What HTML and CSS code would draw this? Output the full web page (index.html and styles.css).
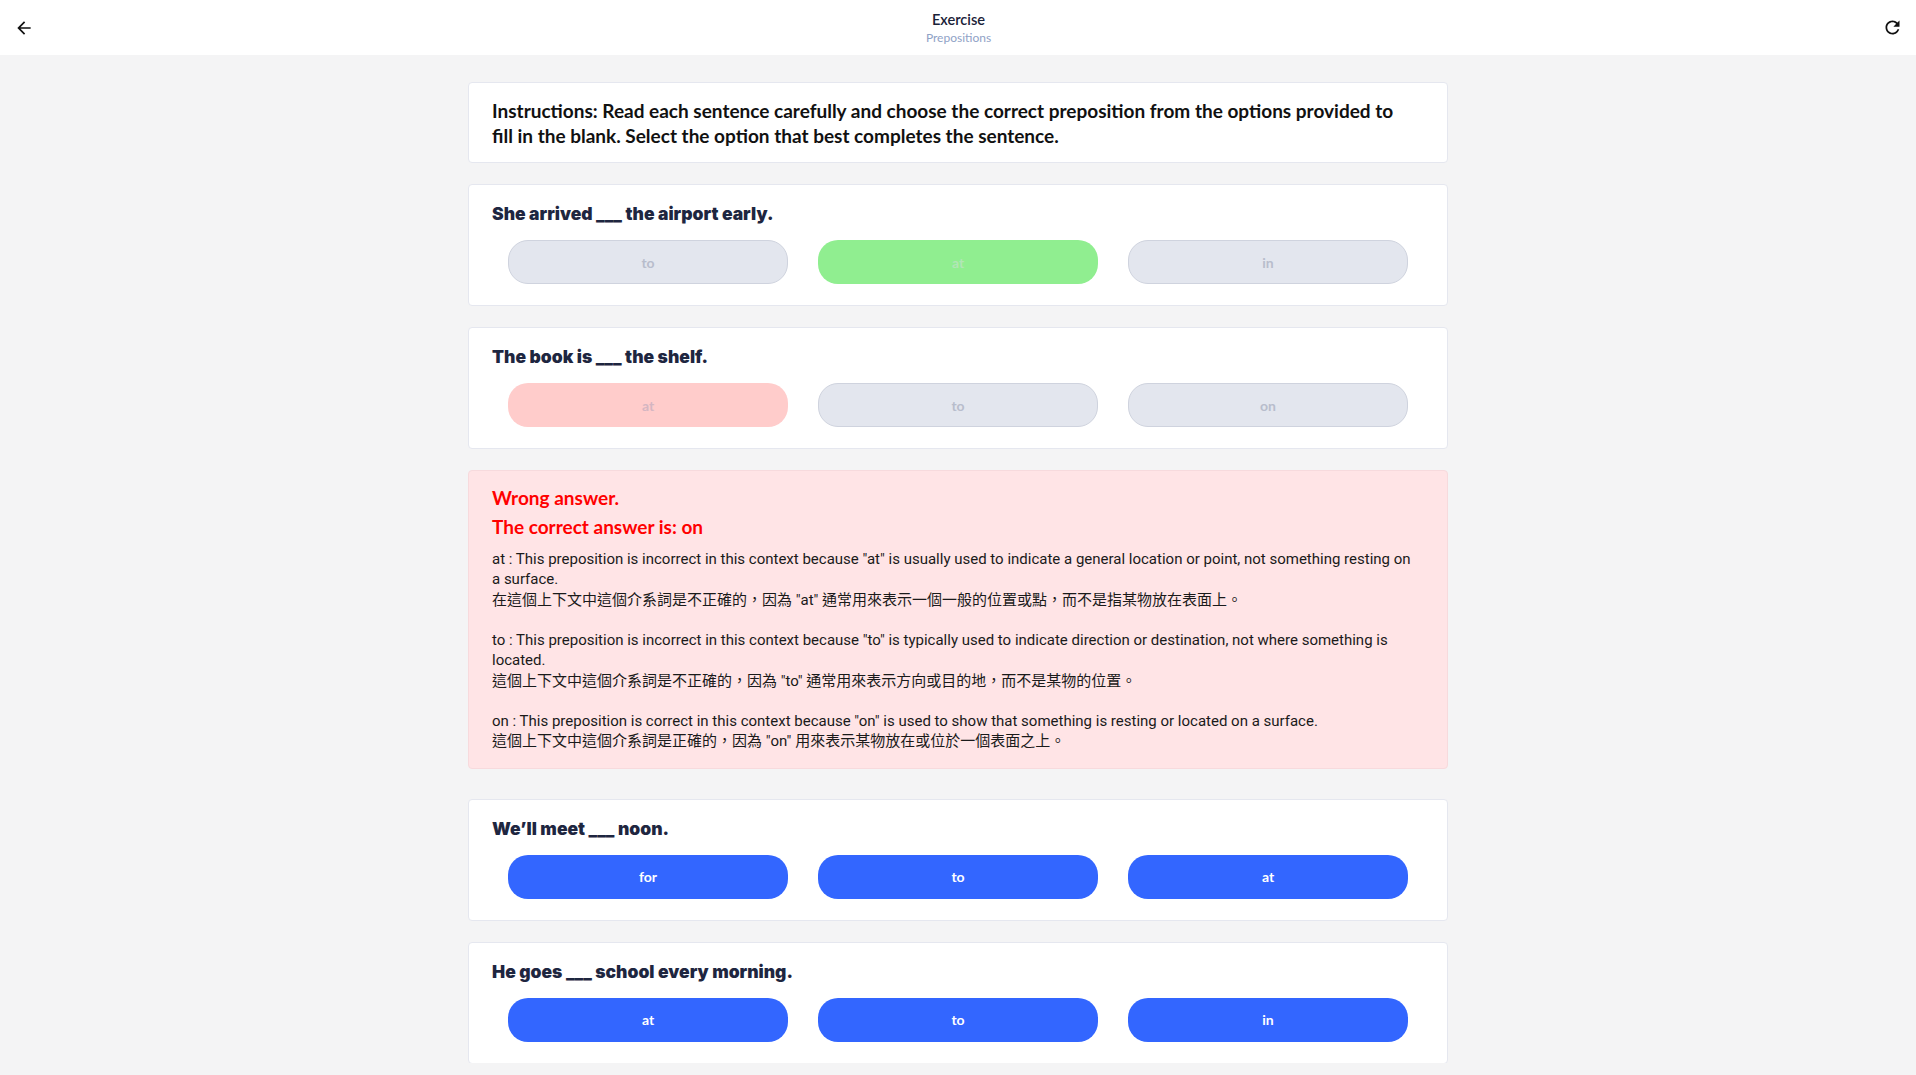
FILE: index.html
```html
<!DOCTYPE html>
<html lang="en">
<head>
<meta charset="utf-8">
<title>Exercise - Prepositions</title>
<link rel="stylesheet" href="styles.css">
</head>
<body>
<header class="topbar">
  <button class="icon-btn back" aria-label="Back">
    <svg viewBox="0 0 24 24" width="20" height="20"><path d="M20 11H7.83l5.59-5.59L12 4l-8 8 8 8 1.41-1.41L7.83 13H20v-2z"/></svg>
  </button>
  <div class="title-block">
    <div class="title">Exercise</div>
    <div class="subtitle">Prepositions</div>
  </div>
  <button class="icon-btn refresh" aria-label="Restart">
    <svg viewBox="0 0 24 24" width="21" height="21"><path d="M17.65 6.35C16.2 4.9 14.21 4 12 4c-4.42 0-7.99 3.58-7.99 8s3.57 8 7.99 8c3.73 0 6.84-2.55 7.73-6h-2.08c-.82 2.33-3.04 4-5.65 4-3.31 0-6-2.69-6-6s2.69-6 6-6c1.66 0 3.14.69 4.22 1.78L13 11h7V4l-2.35 2.35z"/></svg>
  </button>
</header>
<main class="scroll">
  <div class="content">
    <section class="card instructions">Instructions: Read each sentence carefully and choose the correct preposition from the options provided to fill in the blank. Select the option that best completes the sentence.</section>

    <section class="card question">
      <h2 class="q-text">She arrived ___ the airport early.</h2>
      <div class="options">
        <button class="opt opt-idle">to</button>
        <button class="opt opt-correct">at</button>
        <button class="opt opt-idle">in</button>
      </div>
    </section>

    <section class="card question">
      <h2 class="q-text">The book is ___ the shelf.</h2>
      <div class="options">
        <button class="opt opt-wrong">at</button>
        <button class="opt opt-idle">to</button>
        <button class="opt opt-idle">on</button>
      </div>
    </section>

    <section class="feedback">
      <h3 class="fb-head">Wrong answer.</h3>
      <h3 class="fb-head">The correct answer is: on</h3>
      <div class="fb-body">
        <p class="fb-item"><span class="en">at : This preposition is incorrect in this context because "at" is usually used to indicate a general location or point, not something resting on a surface.</span><span class="zh">在這個上下文中這個介系詞是不正確的，因為 "at" 通常用來表示一個一般的位置或點，而不是指某物放在表面上。</span></p>
        <p class="fb-item"><span class="en">to : This preposition is incorrect in this context because "to" is typically used to indicate direction or destination, not where something is located.</span><span class="zh">這個上下文中這個介系詞是不正確的，因為 "to" 通常用來表示方向或目的地，而不是某物的位置。</span></p>
        <p class="fb-item"><span class="en">on : This preposition is correct in this context because "on" is used to show that something is resting or located on a surface.</span><span class="zh">這個上下文中這個介系詞是正確的，因為 "on" 用來表示某物放在或位於一個表面之上。</span></p>
      </div>
    </section>

    <section class="card question">
      <h2 class="q-text">We’ll meet ___ noon.</h2>
      <div class="options">
        <button class="opt opt-active">for</button>
        <button class="opt opt-active">to</button>
        <button class="opt opt-active">at</button>
      </div>
    </section>

    <section class="card question">
      <h2 class="q-text">He goes ___ school every morning.</h2>
      <div class="options">
        <button class="opt opt-active">at</button>
        <button class="opt opt-active">to</button>
        <button class="opt opt-active">in</button>
      </div>
    </section>
  </div>
</main>
</body>
</html>
```
FILE: styles.css
```css
* { box-sizing: border-box; }
html, body { margin: 0; height: 100%; }
body {
  background: #f4f4f5;
  font-family: Lato, "Noto Sans CJK TC", sans-serif;
  overflow: hidden;
  color: #111;
}
.topbar {
  height: 55px;
  background: #fff;
  display: grid;
  grid-template-columns: 1fr auto 1fr;
  align-items: center;
  padding: 0 13px 0 14px;
}
.icon-btn {
  border: 0;
  background: none;
  padding: 0;
  display: flex;
  cursor: pointer;
}
.icon-btn svg { fill: #111; }
.icon-btn.refresh { justify-self: end; }
.title-block { text-align: center; }
.title {
  font-family: Lato, sans-serif;
  font-size: 14.6px;
  line-height: 20px;
  font-weight: 600;
  color: #1a2238;
}
.subtitle {
  font-family: Lato, sans-serif;
  font-size: 12px;
  line-height: 16px;
  color: #8fa2c6;
}

.scroll { height: calc(100vh - 67px); overflow: hidden; }
.content {
  width: 980px;
  margin: 0 auto;
  padding-top: 27px;
  display: flex;
  flex-direction: column;
  gap: 21px;
}
.card {
  background: #fff;
  border: 1px solid #e5e7ef;
  border-radius: 4px;
}
.instructions {
  padding: 15px 40px 14px 23px;
  font-family: Lato, sans-serif;
  font-size: 19px;
  line-height: 25px;
  font-weight: 700;
  color: #111;
}
.question { padding: 17px 23px 21px; }
.q-text {
  margin: 0 0 14px;
  font-family: Inter, Lato, sans-serif;
  font-size: 17.5px;
  line-height: 24px;
  font-weight: 900;
  color: #1e2640;
}
.options {
  display: grid;
  grid-template-columns: repeat(3, 1fr);
  gap: 30px;
  padding: 0 16px;
}
.opt {
  height: 44px;
  border-radius: 20px;
  border: 1px solid transparent;
  font-family: Lato, sans-serif;
  font-weight: 700;
  font-size: 14px;
  padding: 0;
}
.opt-idle { background: #e3e6ee; border-color: #cfd3de; color: #b8bdcc; }
.opt-correct { background: #90ee90; color: #b2e6b6; }
.opt-wrong { background: #ffcccb; color: #d4b6c2; }
.opt-active { background: #3366ff; color: #fff; }

.feedback {
  background: #ffe4e6;
  border: 1px solid #f7dadd;
  border-radius: 4px;
  padding: 13px 28px 16px 23px;
  margin-bottom: 9px;
}
.fb-head {
  margin: 0;
  font-family: Lato, sans-serif;
  font-size: 19px;
  line-height: 28px;
  font-weight: 700;
  color: #ff0000;
}
.fb-head + .fb-head { margin-top: 1px; }
.fb-body {
  margin-top: 8px;
  font-family: Roboto, "Noto Sans CJK TC", sans-serif;
  font-size: 15px;
  line-height: 20.25px;
  color: #1a1a1a;
}
.fb-item { margin: 0 0 20.25px; }
.fb-item:last-child { margin-bottom: 0; }
.en, .zh { display: block; }
```
